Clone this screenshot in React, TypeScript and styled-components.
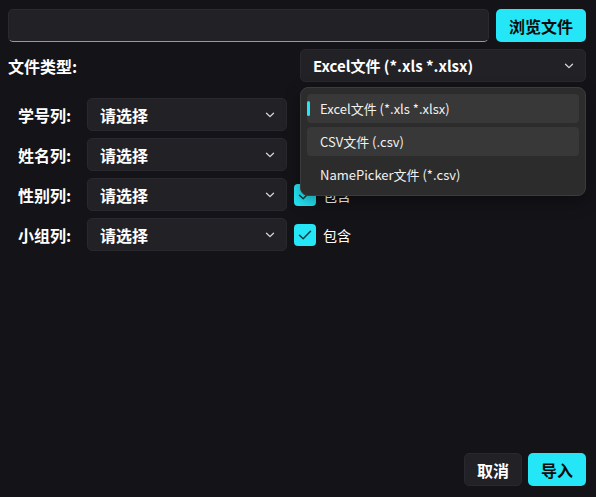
import React from "react";
import styled, { createGlobalStyle } from "styled-components";

const GlobalStyle = createGlobalStyle`
  html, body { margin: 0; padding: 0; background: #141318; }
  body { font-family: "Noto Sans CJK SC", "Noto Sans", sans-serif; color: #ffffff; }
  * { box-sizing: border-box; }
`;

const CYAN = "#24e6f6";

const Page = styled.div`
  width: 596px;
  height: 497px;
  padding: 9px 10px 11px 8px;
  display: flex;
  flex-direction: column;
  background: #141318;
`;

const TopRow = styled.div`
  display: flex;
  gap: 7px;
  height: 33px;
`;

const PathInput = styled.div`
  flex: 1;
  height: 33px;
  background: #222126;
  border: 1px solid #2b2a30;
  border-bottom: 1px solid #9a9a9e;
  border-radius: 5px;
`;

const PrimaryButton = styled.button<{ $w: number }>`
  width: ${(p) => p.$w}px;
  height: 33px;
  border: none;
  border-radius: 5px;
  background: ${CYAN};
  color: #0b0b0d;
  font-family: inherit;
  font-size: 16px;
  font-weight: 700;
  padding: 0;
  display: flex;
  align-items: center;
  justify-content: center;
`;

const SecondaryButton = styled(PrimaryButton)`
  background: #222126;
  color: #ffffff;
  border: 1px solid #29282e;
`;

const TypeRow = styled.div`
  margin-top: 7px;
  display: flex;
  align-items: center;
  justify-content: space-between;
  height: 33px;
`;

const TypeLabel = styled.div`
  font-size: 16px;
  font-weight: 700;
  line-height: 1;
`;

const SelectWrap = styled.div<{ $w: number }>`
  position: relative;
  width: ${(p) => p.$w}px;
`;

const SelectBox = styled.div<{ $fs?: number }>`
  height: 33px;
  background: #222126;
  border: 1px solid #29282e;
  border-radius: 5px;
  display: flex;
  align-items: center;
  justify-content: space-between;
  padding: 0 11px 0 12px;
  font-size: ${(p) => p.$fs ?? 16}px;
  font-weight: 700;
  color: #ffffff;
`;

const Popup = styled.div`
  position: absolute;
  left: 0;
  right: 0;
  top: 38px;
  z-index: 10;
  background: #2c2c2c;
  border: 1px solid #3b3b3b;
  border-radius: 8px;
  padding: 6px;
  display: flex;
  flex-direction: column;
  gap: 4px;
  box-shadow: 0 6px 16px rgba(0, 0, 0, 0.35);
`;

const Item = styled.div<{ $active?: boolean }>`
  position: relative;
  height: 29px;
  border-radius: 4px;
  background: ${(p) => (p.$active ? "#383838" : "transparent")};
  display: flex;
  align-items: center;
  padding-left: 13px;
  font-size: 13px;
  color: #f2f2f2;
`;

const Indicator = styled.span`
  position: absolute;
  left: 0;
  top: 7px;
  width: 3px;
  height: 15px;
  border-radius: 2px;
  background: ${CYAN};
`;

const Fields = styled.div`
  margin-top: 16px;
  display: flex;
  flex-direction: column;
  gap: 7px;
`;

const FieldRow = styled.div`
  display: flex;
  align-items: center;
  height: 33px;
  padding-left: 10px;
`;

const FieldLabel = styled.div`
  width: 69px;
  font-size: 16px;
  font-weight: 700;
`;

const Check = styled.label`
  margin-left: 7px;
  display: flex;
  align-items: center;
  gap: 7px;
  font-size: 14px;
  color: #ffffff;
`;

const CheckBox = styled.span`
  width: 22px;
  height: 22px;
  border-radius: 4px;
  background: ${CYAN};
  display: flex;
  align-items: center;
  justify-content: center;
`;

const Spacer = styled.div`
  flex: 1;
`;

const Footer = styled.div`
  display: flex;
  justify-content: flex-end;
  gap: 6px;
`;

const Chevron = () => (
  <svg width="10" height="6" viewBox="0 0 10 6">
    <path d="M1.5 1.2 L5 4.6 L8.5 1.2" fill="none" stroke="#d6d6d6" strokeWidth="1.3" strokeLinecap="round" strokeLinejoin="round" />
  </svg>
);

const Tick = () => (
  <svg width="14" height="12" viewBox="0 0 14 12">
    <path d="M1.5 6.3 L5.2 9.8 L12.5 2.2" fill="none" stroke="#0f3b42" strokeWidth="1.5" strokeLinecap="round" strokeLinejoin="round" />
  </svg>
);

const fields = [
  { label: "学号列:", check: false },
  { label: "姓名列:", check: false },
  { label: "性别列:", check: true },
  { label: "小组列:", check: true },
];

export default function App() {
  return (
    <Page>
      <GlobalStyle />
      <TopRow>
        <PathInput />
        <PrimaryButton $w={90}>浏览文件</PrimaryButton>
      </TopRow>
      <TypeRow>
        <TypeLabel>文件类型:</TypeLabel>
        <SelectWrap $w={286}>
          <SelectBox $fs={15}>
            <span>Excel文件 (*.xls *.xlsx)</span>
            <Chevron />
          </SelectBox>
          <Popup>
            <Item $active>
              <Indicator />
              Excel文件 (*.xls *.xlsx)
            </Item>
            <Item $active>CSV文件 (.csv)</Item>
            <Item>NamePicker文件 (*.csv)</Item>
          </Popup>
        </SelectWrap>
      </TypeRow>
      <Fields>
        {fields.map((f) => (
          <FieldRow key={f.label}>
            <FieldLabel>{f.label}</FieldLabel>
            <SelectWrap $w={200}>
              <SelectBox>
                <span>请选择</span>
                <Chevron />
              </SelectBox>
            </SelectWrap>
            {f.check && (
              <Check>
                <CheckBox>
                  <Tick />
                </CheckBox>
                包含
              </Check>
            )}
          </FieldRow>
        ))}
      </Fields>
      <Spacer />
      <Footer>
        <SecondaryButton $w={58}>取消</SecondaryButton>
        <PrimaryButton $w={58}>导入</PrimaryButton>
      </Footer>
    </Page>
  );
}
